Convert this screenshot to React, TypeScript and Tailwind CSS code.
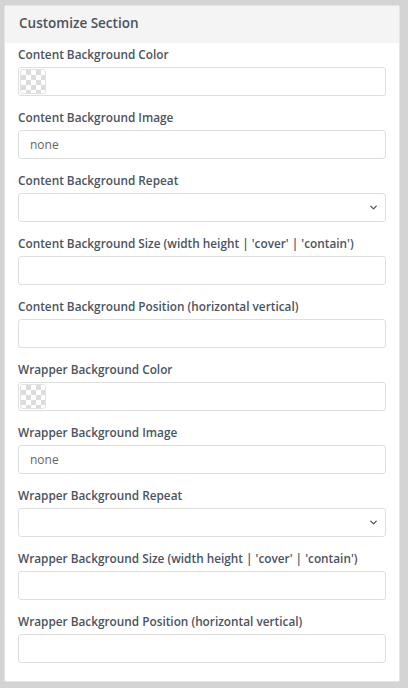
import { ChevronDown } from 'lucide-react';

type Field = { label: string; kind: 'color' | 'text' | 'select'; value?: string };

const fields: Field[] = [
  { label: 'Content Background Color', kind: 'color' },
  { label: 'Content Background Image', kind: 'text', value: 'none' },
  { label: 'Content Background Repeat', kind: 'select' },
  { label: "Content Background Size (width height | 'cover' | 'contain')", kind: 'text' },
  { label: 'Content Background Position (horizontal vertical)', kind: 'text' },
  { label: 'Wrapper Background Color', kind: 'color' },
  { label: 'Wrapper Background Image', kind: 'text', value: 'none' },
  { label: 'Wrapper Background Repeat', kind: 'select' },
  { label: "Wrapper Background Size (width height | 'cover' | 'contain')", kind: 'text' },
  { label: 'Wrapper Background Position (horizontal vertical)', kind: 'text' },
];

function Checker() {
  return (
    <div
      className="w-[26px] h-[25px] rounded-[3px] border border-[#e2e2e2]"
      style={{
        backgroundColor: '#fff',
        backgroundImage:
          'linear-gradient(45deg,#dcdcdc 25%,transparent 25%,transparent 75%,#dcdcdc 75%),linear-gradient(45deg,#dcdcdc 25%,transparent 25%,transparent 75%,#dcdcdc 75%)',
        backgroundSize: '10px 10px',
        backgroundPosition: '0 0,5px 5px',
      }}
    />
  );
}

export default function App() {
  return (
    <div
      className="w-[408px] h-[688px] bg-[#d4d4d4] pt-[5px] pl-[4px] pr-[8px]"
      style={{ fontFamily: '"Open Sans", "Liberation Sans", sans-serif' }}
    >
      <div className="bg-white h-[677px] rounded-[2px] border border-[#e4e4e4] overflow-hidden">
        <div className="h-[37px] bg-[#f4f4f4] flex items-center px-[14px] pb-[3px]">
          <h2 className="text-[13.5px] font-semibold text-[#4b5361]">Customize Section</h2>
        </div>
        <div className="px-[13px] pt-[3px]">
          {fields.map((f, i) => (
            <div key={i} className="h-[63px]">
              <label className="block h-[21px] leading-[17px] text-[11.8px] font-semibold text-[#4b5361] whitespace-nowrap">
                {f.label}
              </label>
              <div className="h-[29px] border border-[#dedede] rounded-[3px] flex items-center bg-white">
                {f.kind === 'color' && (
                  <div className="pl-[1px]">
                    <Checker />
                  </div>
                )}
                {f.kind === 'text' && (
                  <span className="pl-[11px] text-[12px] text-[#666]">{f.value}</span>
                )}
                {f.kind === 'select' && (
                  <div className="flex-1 flex justify-end pr-[6px]">
                    <ChevronDown className="w-[11px] h-[11px] text-[#555]" strokeWidth={3} />
                  </div>
                )}
              </div>
            </div>
          ))}
        </div>
      </div>
    </div>
  );
}
